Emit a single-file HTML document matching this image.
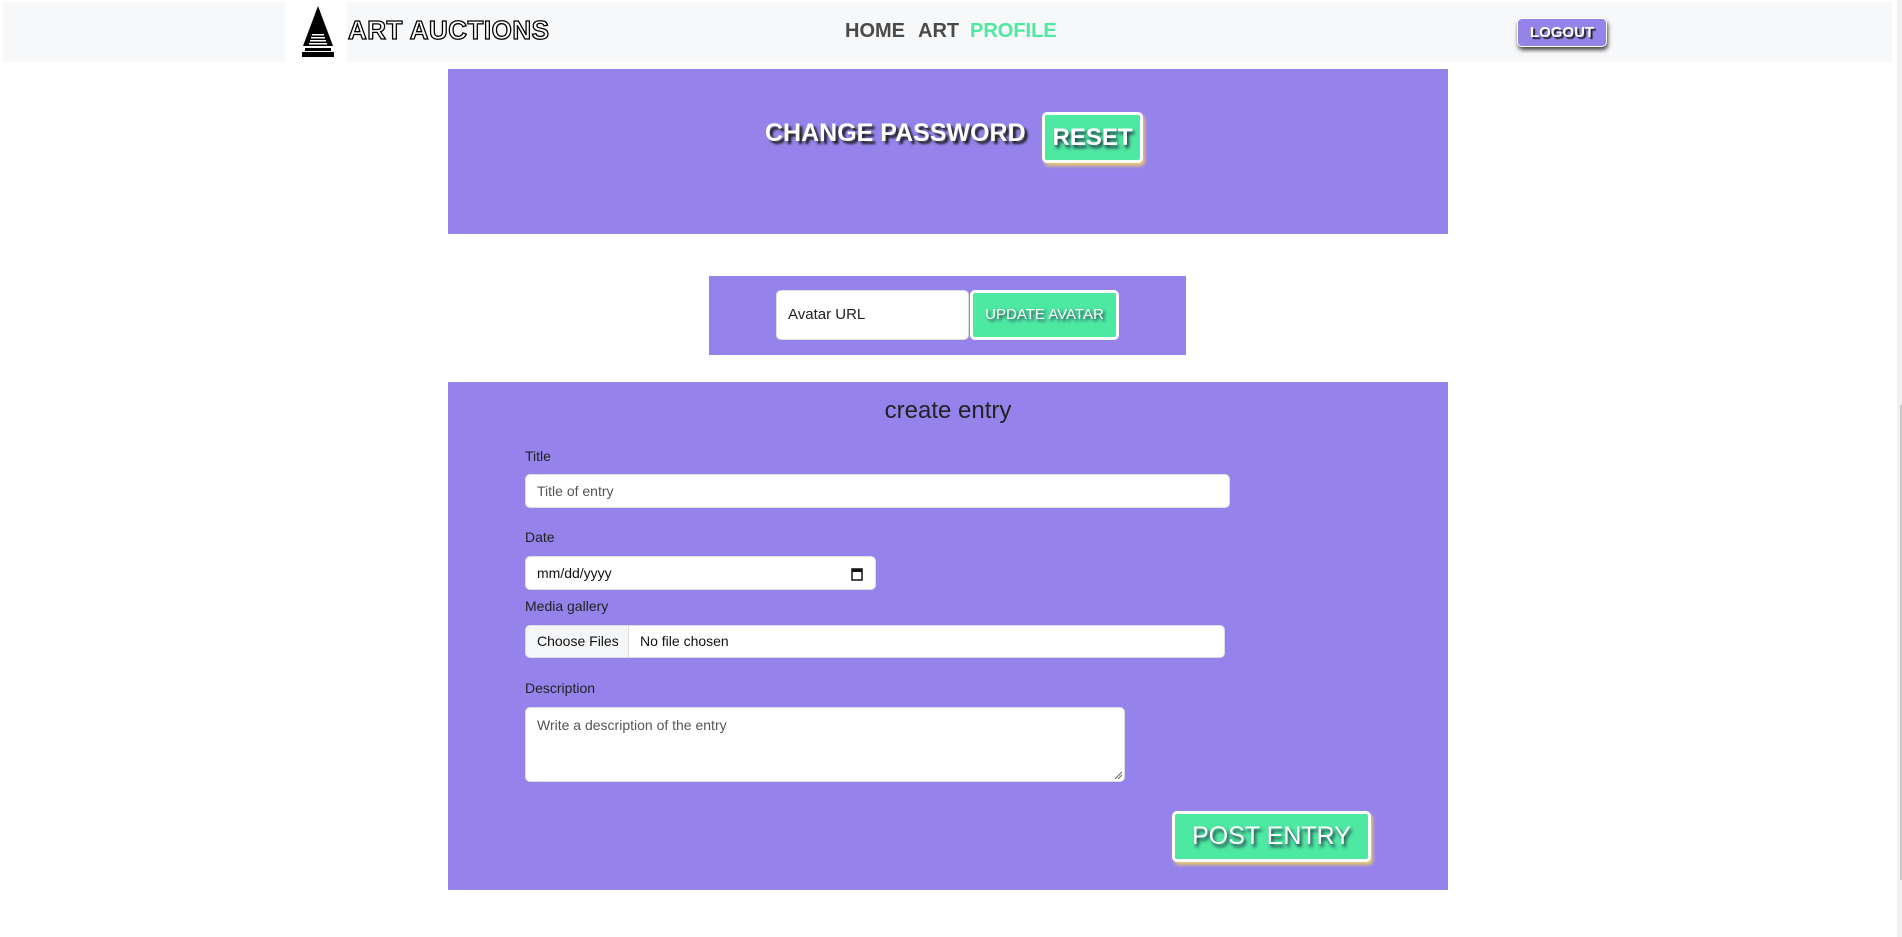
<!DOCTYPE html>
<html><head><meta charset="utf-8"><style>
*{box-sizing:border-box;margin:0;padding:0}
body{width:1902px;height:937px;background:#fff;position:relative;overflow:hidden;font-family:"Liberation Sans",sans-serif}
.abs{position:absolute}
.nav{left:3px;top:2px;width:1889px;height:60px;background:#f7f8fa}
.logobox{left:285px;top:2px;width:62px;height:60px;background:#fff}
.brand{left:348px;top:14px;font-size:26px;font-weight:bold;color:#fff;-webkit-text-stroke:1.3px #000;letter-spacing:0.5px;line-height:32px}
.nl{top:18px;font-size:20px;font-weight:bold;color:#4a4a4a;line-height:26px}
.logout{left:1517px;top:18px;width:90px;height:29px;background:#9583ea;border:1px solid #fff;border-radius:5px;box-shadow:1px 3px 4px #444;color:#fff;font-weight:bold;font-size:15px;text-align:center;line-height:27px;text-shadow:2px 2px 1px #222}
.purple{background:#9583eb}
.green{background:#4de8a2;border:3px solid #fff;border-radius:5px;color:#fff;text-align:center}
.lbl{left:525px;font-size:14px;color:#222}
.inp{background:#fff;border:1px solid #ddd;border-radius:5px;font-size:14px;color:#555;padding-left:11px}
</style></head><body>
<div class="abs nav"></div>
<div class="abs logobox"></div>
<svg class="abs" style="left:300px;top:5px" width="36" height="54" viewBox="0 0 36 54">
<polygon points="18,1 3,41 33,41" fill="#000"/>
<rect x="12" y="29" width="12" height="1.5" fill="#fff"/>
<rect x="11" y="32" width="14" height="1.5" fill="#fff"/>
<rect x="10" y="35" width="16" height="1.5" fill="#fff"/>
<rect x="9" y="38" width="18" height="1.5" fill="#fff"/>
<rect x="5" y="43" width="26" height="3" fill="#000"/>
<rect x="2" y="47" width="32" height="5" fill="#000"/>
</svg>
<div class="abs brand">ART AUCTIONS</div>
<div class="abs nl" style="left:845px">HOME</div>
<div class="abs nl" style="left:918px">ART</div>
<div class="abs nl" style="left:970px;color:#4ee8a0">PROFILE</div>
<div class="abs logout">LOGOUT</div>

<div class="abs purple" style="left:448px;top:69px;width:1000px;height:165px"></div>
<div class="abs" style="left:765px;top:118px;font-size:25px;font-weight:bold;color:#fff;text-shadow:3px 3px 2px #222;line-height:30px">CHANGE PASSWORD</div>
<div class="abs green" style="left:1042px;top:112px;width:101px;height:51px;font-size:24px;font-weight:bold;line-height:45px;text-shadow:2px 3px 3px #234;box-shadow:2px 3px 3px #e8c870">RESET</div>

<div class="abs purple" style="left:709px;top:276px;width:477px;height:79px"></div>
<div class="abs inp" style="left:776px;top:290px;width:193px;height:50px;line-height:48px;color:#222;font-size:15px">Avatar URL</div>
<div class="abs green" style="left:970px;top:290px;width:149px;height:50px;font-size:15px;line-height:44px;text-shadow:2px 2px 3px #234">UPDATE AVATAR</div>

<div class="abs purple" style="left:448px;top:382px;width:1000px;height:508px"></div>
<div class="abs" style="left:448px;width:1000px;top:397px;text-align:center;font-size:24px;color:#222">create entry</div>
<div class="abs lbl" style="top:448px">Title</div>
<div class="abs inp" style="left:525px;top:474px;width:705px;height:34px;line-height:32px">Title of entry</div>
<div class="abs lbl" style="top:529px">Date</div>
<div class="abs inp" style="left:525px;top:556px;width:351px;height:34px;line-height:32px;color:#111">mm/dd/yyyy
<svg style="position:absolute;right:12px;top:10px" width="12" height="14" viewBox="0 0 12 14"><rect x="1" y="2" width="10" height="11" fill="none" stroke="#111" stroke-width="1.5"/><rect x="1" y="2" width="10" height="3" fill="#111"/></svg></div>
<div class="abs lbl" style="top:598px">Media gallery</div>
<div class="abs inp" style="left:525px;top:625px;width:700px;height:33px;padding:0;line-height:31px;color:#111;overflow:hidden">
<span style="display:inline-block;width:103px;background:#f5f6f8;border-right:1px solid #ddd;padding-left:11px">Choose Files</span><span style="padding-left:11px">No file chosen</span></div>
<div class="abs lbl" style="top:680px">Description</div>
<div class="abs inp" style="left:525px;top:707px;width:600px;height:75px;padding-top:9px">Write a description of the entry
<svg style="position:absolute;right:2px;bottom:2px" width="8" height="8" viewBox="0 0 8 8"><path d="M1 8L8 1M4 8L8 4" stroke="#666" stroke-width="1"/></svg></div>
<div class="abs green" style="left:1172px;top:811px;width:199px;height:51px;font-size:25px;line-height:45px;text-shadow:2px 3px 3px #234;box-shadow:2px 3px 3px #e8c870">POST ENTRY</div>

<div class="abs" style="left:1897px;top:0;width:5px;height:937px;background:#f0f0f0"></div>
<div class="abs" style="left:1900px;top:405px;width:2px;height:475px;background:#c4c4c4"></div>
</body></html>
